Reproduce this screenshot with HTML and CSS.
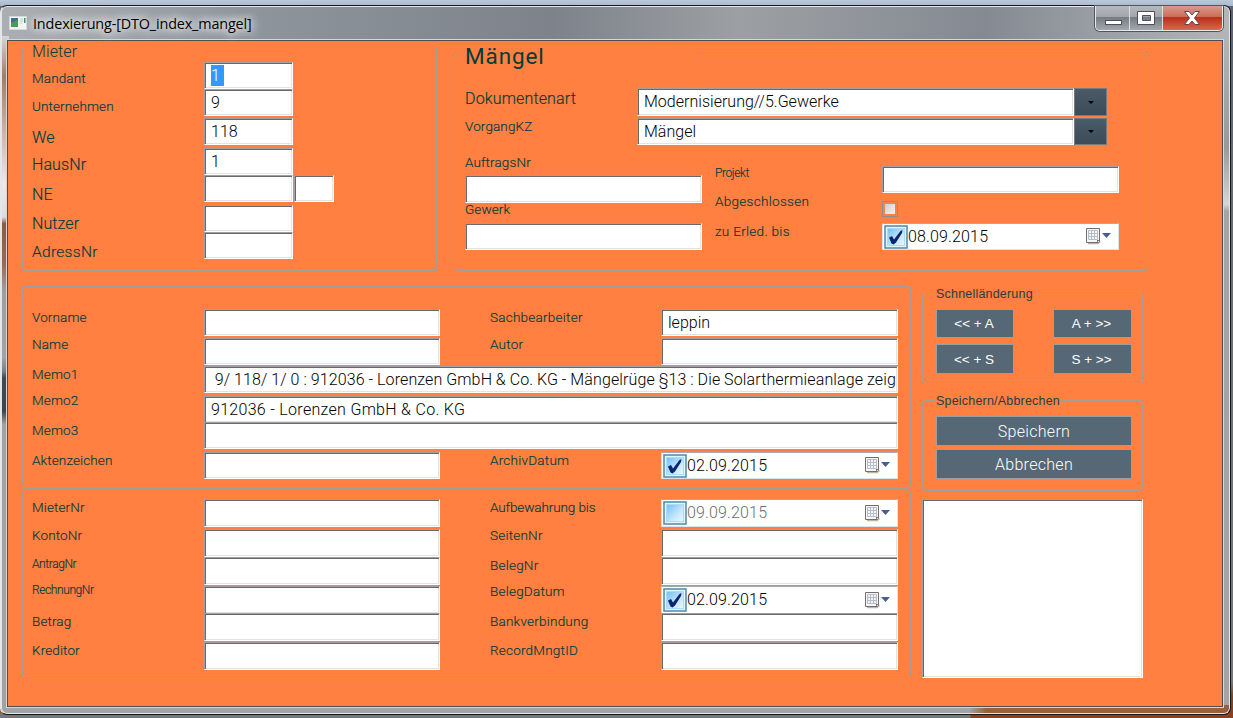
FILE: index.html
```html
<!DOCTYPE html>
<html lang="de">
<head>
<meta charset="utf-8">
<title>Indexierung</title>
<link rel="stylesheet" href="styles.css">
</head>
<body>
<svg class="defs" width="0" height="0" aria-hidden="true">
  <linearGradient id="blue" x1="0" y1="0" x2="1" y2="1"><stop offset="0" stop-color="#72bff5"/><stop offset=".6" stop-color="#c5e7fc"/><stop offset="1" stop-color="#e9f7ff"/></linearGradient>
  <symbol id="box" viewBox="0 0 24 24">
    <rect x="1" y="1" width="22" height="22" fill="#def9fd" stroke="#5187a8" stroke-width="1.5"/>
    <rect x="3.5" y="3.5" width="17" height="17" fill="url(#blue)" stroke="#a7dcfb"/>
  </symbol>
  <symbol id="tick" viewBox="0 0 24 24">
    <path d="M5 12.500l3-1.500 2 3.500L16.500 6l2-1-.5 3L12 17.500l-2.500 2-2-1z" fill="#0b2474"/>
  </symbol>
  <symbol id="cal" viewBox="0 0 26 17">
    <path d="M2 15.500h10l2.500-2" fill="none" stroke="#b9b3b1" stroke-width="1.500"/>
    <path d="M.500.500h13v13l-1 1h-12z" fill="#f7f7f7" stroke="#776b6b"/>
    <path d="M2.500 2.500h9v9h-9zM5.500 2.500v9M8.500 2.500v9M2.500 5.500h9M2.500 8.500h9" fill="none" stroke="#b5bdca"/>
    <path d="M11 14.500v-2.500h2.500z" fill="#776b6b"/>
    <path d="M16 5h9l-4.500 5z" fill="#44618f"/>
  </symbol>
</svg>
<div class="window">
  <header class="titlebar">
    <svg class="app-icon" width="18" height="16" viewBox="0 0 18 16"><path d="M.5 1.500h17v13H.5z" fill="#f3f5f3" stroke="#d4d8d8"/><path d="M2 3h7v9H2z" fill="#2b7a8e"/><path d="M2 8l7-3v7H2z" fill="#4c9b58"/><path d="M11 4h3M11 6h3M11 8h2" stroke="#c3c8c8"/><path d="M15 3h1.500v5H15z" fill="#3a8d7a"/></svg>
    <h1>Indexierung-[DTO_index_mangel]</h1>
    <div class="controls">
      <span class="ctl min"><svg width="34" height="23"><rect x="9.500" y="14.500" width="16" height="4" fill="#fff" stroke="#4d5058"/></svg></span>
      <span class="ctl max"><svg width="32" height="23"><path d="M7.500 5.500h17v13h-17zM12.500 9.500v5h8v-5z" fill="#fff" fill-rule="evenodd" stroke="#4d5058"/></svg></span>
      <span class="ctl close"><svg width="58" height="23"><path d="M21.500 5.500h4.500l3 3.500 3-3.500h4.500l-5 6.500 5 6.500h-4.500l-3-3.500-3 3.500h-4.500l5-6.500z" fill="#fff" stroke="#6a4345"/></svg></span>
    </div>
  </header>
  <main class="client">
    <div class="top">
      <section class="group mieter">
        <h2 class="legend l16">Mieter</h2>
        <div class="labels">
          <label>Mandant</label><label>Unternehmen</label><label class="l16">We</label><label class="l16">HausNr</label><label class="l16">NE</label><label class="l16">Nutzer</label><label class="l16 adr">AdressNr</label>
        </div>
        <div class="fields">
          <div class="field"><span class="sel">1</span></div><div class="field">9</div><div class="field">118</div><div class="field">1</div><div class="pair"><div class="field"></div><div class="field"></div></div><div class="field"></div><div class="field"></div>
        </div>
      </section>
      <section class="group mangel">
        <h2 class="legend">Mängel</h2>
        <div class="docs">
          <div class="doc-labels"><label class="l16 dok">Dokumentenart</label><label>VorgangKZ</label></div>
          <div class="combos">
            <div class="combo"><div class="field">Modernisierung//5.Gewerke</div><span class="drop"></span></div>
            <div class="combo"><div class="field">Mängel</div><span class="drop"></span></div>
          </div>
        </div>
        <div class="order">
          <div class="order-left"><label>AuftragsNr</label><div class="field"></div><label>Gewerk</label><div class="field"></div></div>
          <div class="order-labels"><label class="l12">Projekt</label><label>Abgeschlossen</label><label>zu Erled. bis</label></div>
          <div class="order-fields"><div class="field"></div><span class="check"></span>
            <div class="date"><svg class="cb"><use href="#box"/><use href="#tick"/></svg><span>08.09.2015</span><svg class="cal"><use href="#cal"/></svg></div></div>
        </div>
      </section>
    </div>
    <div class="bottom">
      <div class="stack">
        <section class="group person">
          <div class="labels"><label>Vorname</label><label>Name</label><label>Memo1</label><label>Memo2</label><label>Memo3</label><label>Aktenzeichen</label></div>
          <div class="person-grid">
            <div class="field a"></div><label>Sachbearbeiter</label><div class="field c">leppin</div>
            <div class="field a"></div><label>Autor</label><div class="field c"></div>
            <div class="field wide memo1">&nbsp;9/ 118/ 1/ 0 : 912036 - Lorenzen GmbH &amp; Co. KG - Mängelrüge §13 : Die Solarthermieanlage zeig</div>
            <div class="field wide memo2">912036 - Lorenzen GmbH &amp; Co. KG</div>
            <div class="field wide"></div>
            <div class="field a"></div><label>ArchivDatum</label>
            <div class="date c"><svg class="cb"><use href="#box"/><use href="#tick"/></svg><span>02.09.2015</span><svg class="cal"><use href="#cal"/></svg></div>
          </div>
        </section>
        <section class="group booking">
          <div class="labels"><label>MieterNr</label><label>KontoNr</label><label class="l12">AntragNr</label><label class="l12">RechnungNr</label><label>Betrag</label><label>Kreditor</label></div>
          <div class="fields"><div class="field"></div><div class="field"></div><div class="field"></div><div class="field"></div><div class="field"></div><div class="field"></div></div>
          <div class="labels second"><label>Aufbewahrung bis</label><label>SeitenNr</label><label>BelegNr</label><label>BelegDatum</label><label>Bankverbindung</label><label>RecordMngtID</label></div>
          <div class="fields">
            <div class="date off"><svg class="cb"><use href="#box"/></svg><span>09.09.2015</span><svg class="cal"><use href="#cal"/></svg></div>
            <div class="field"></div><div class="field"></div>
            <div class="date"><svg class="cb"><use href="#box"/><use href="#tick"/></svg><span>02.09.2015</span><svg class="cal"><use href="#cal"/></svg></div>
            <div class="field"></div><div class="field"></div>
          </div>
        </section>
      </div>
      <aside class="side">
        <section class="group quick"><h2 class="legend">Schnelländerung</h2>
          <button>&lt;&lt; + A</button><button>A + &gt;&gt;</button><button>&lt;&lt; + S</button><button>S + &gt;&gt;</button>
        </section>
        <section class="group save"><h2 class="legend">Speichern/Abbrechen</h2>
          <button>Speichern</button><button>Abbrechen</button>
        </section>
        <div class="field notes"></div>
      </aside>
    </div>
  </main>
</div>
</body>
</html>
```
FILE: styles.css
```css
* { box-sizing: border-box; }
body {
  margin: 0; width: 1233px; height: 718px; overflow: hidden; padding-top: 5px;
  background:
    linear-gradient(90deg, #777 970px, #8a411f 971px) 0 713px / 100% 5px no-repeat,
    linear-gradient(#b9c9db, #a9b8ca) 0 0 / 100% 6px no-repeat,
    linear-gradient(#5c6470, #6d6f73 40%, #777 95%, #8a411f 97%);
  font: 300 13.5px/20px Roboto, "Liberation Sans", sans-serif; color: #003c3c;
}
.defs { position: absolute; }
.window {
  width: 1231px; height: 710px; border: 1px solid #17191c; border-left-color: #e3e6e9; border-radius: 7px;
  box-shadow: inset 0 0 0 1px #e4e7e9; padding: 1px 7px 0 6px;
  background:
    linear-gradient(90deg, transparent 968px, #99603f 985px) 0 699px / 100% 10px no-repeat,
    linear-gradient(#d5d5d5, #a47c67 6%, #f1e6e4 22%, #ddd 27%, #8d5c42 28%, #9a6b50 34%, #9d9f9f 38%, #a3a3a3 48%, #76818b 50%, #414a53 51%, #3c444c 56%, #a2a2a2 58%) 0 30px / 8px 670px no-repeat,
    linear-gradient(90deg, #abafb3 0, #8f959d 20%, #7e838b 45%, #9ca0a4 60%, #858a92 80%, #b2b6b9) 0 0 / 100% 35px no-repeat,
    linear-gradient(#b8bbbd, #999 20%, #d6d6d6 28%, #a4a4a4 29%, #a4a4a4);
}
.titlebar { display: flex; height: 33px; }
.app-icon { margin: 8px 0 0 2px; }
.titlebar h1 {
  margin: 6px 0 0 6px; font: 400 14.4px/22px "Open Sans", sans-serif; letter-spacing: -.15px; color: #000;
  text-shadow: 0 0 8px #fff, 0 0 10px #fff, 0 0 14px #e8eaec;
}
.controls { display: flex; margin: -1px 0 0 auto; height: 25px; border: 1px solid #e7e9ea; border-top: 0; border-radius: 0 0 5px 5px; box-shadow: 0 0 0 1px #50545b; overflow: hidden; width: 128px; }
.ctl { background: linear-gradient(#b5b9be, #a2a6ac 45%, #777c84 48%, #a3a7ad); border-right: 1px solid #dcdee0; }
.min { width: 34px; } .max { width: 33px; } .close { width: 59px; border: 0; background: linear-gradient(#d99a8d, #cd6d59 44%, #b8301a 48%, #d8684e); }
.ctl svg { display: block; }
.client { width: 1216px; height: 667px; background: #ff8040; border: 1px solid #4d4d4d; outline: 1px solid #d7d7d7; }

.group { position: relative; border: 1px solid #9f9f97; border-bottom-width: 2px; border-radius: 4px; }
.legend { position: absolute; left: 9px; top: -10px; margin: 0; font-size: 16px; font-weight: 300; line-height: 20px; background: #ff8040; }
label { display: block; height: 20px; white-space: nowrap; letter-spacing: .12px; padding-left: 1px; -webkit-text-stroke: .15px #003c3c; }
.l16 { font-size: 16px; letter-spacing: .1px; }
.adr { font-size: 15.500px; letter-spacing: .3px; }
.dok { letter-spacing: .15px; }
.l12 { font-size: 12px; letter-spacing: -.4px; line-height: 22px; }
.field {
  background: #fff; border: 1px solid #fff; border-top-color: #a0a0a0; border-left-color: #a0a0a0;
  box-shadow: inset 1px 1px #696969, inset -1px -1px #e3e3e3;
  padding: 2px 0 0 6px; font-size: 16px; line-height: 22px; color: #000; white-space: nowrap; overflow: hidden; letter-spacing: .02px;
}
.sel { background: #39f; color: #fff; display: inline-block; height: 21px; line-height: 21px; width: 13px; }

.top { display: flex; gap: 17px; padding: 6px 0 0 14px; }
.mieter { width: 416px; height: 224px; border-right-width: 2px; display: flex; }
.mieter .legend { width: 66px; top: -6px; padding-left: 0; }
.mieter .labels { flex: none; width: 181px; padding: 20px 0 0 8px; display: grid; grid-template-rows: 28px 32px 27px 30px 29px 28px 20px; align-content: start; align-items: start; }
.mieter .fields { padding-top: 14px; width: 130px; display: grid; grid-template-rows: 27px 29px 30px 27px 30px 27px 27px; align-content: start; }
.mieter .field { width: 89px; height: 27px; }
.pair { display: flex; gap: 1px; }
.pair .field + .field { width: 40px; }
.mangel { width: 693px; height: 218px; margin-top: 6px; padding-left: 9px; }
.mangel label { padding-left: 0; }
.mangel .legend { font-size: 22.500px; font-weight: 400; line-height: 26px; width: 237px; letter-spacing: .9px; top: -11px; left: 9px; }
.docs { display: flex; padding-top: 34px; }
.doc-labels { width: 172px; display: grid; grid-template-rows: 27px 20px; padding-top: 1px; }
.combos { display: grid; grid-template-rows: 28px 27px; gap: 2px; }
.combo { display: flex; width: 470px; }
.combo .field { width: 437px; }
.drop { width: 33px; border: 1px solid #777a7b; background: linear-gradient(#4a5b69, #3c4b57); display: grid; place-items: center; }
.drop::after { content: ""; border: 3px solid transparent; border-top-color: #000; border-bottom: 0; }
.order { display: flex; }
.order-left { width: 250px; padding-top: 7px; display: grid; grid-template-rows: 23px 28px 20px 27px; }
.order-left .field { width: 237px; }
.order-left label:nth-of-type(2) { margin-top: -4px; }
.order-labels { width: 167px; padding-top: 17px; display: grid; grid-template-rows: 29px 30px 20px; align-content: start; }
.order-labels label + label { letter-spacing: .3px; }
.order-fields { width: 237px; padding-top: 21px; display: grid; grid-template-rows: 27px 16px 27px; row-gap: 7px; align-content: start; }
.check { width: 16px; height: 16px; margin-top: 1px; border: 1px solid #8e8f8f; background: linear-gradient(135deg, #cbcfd3, #f4f4f4) content-box; background-color: #f4f4f4; padding: 2px; }
.date { height: 27px; background: #fff; border: 1px solid #dfe1e8; border-top-color: #a9abb0; display: flex; align-items: center; font-size: 16px; letter-spacing: .15px; color: #000; padding: 0 6px 0 1px; }
.cb { width: 24px; height: 24px; }
.cal { width: 26px; height: 17px; margin-left: auto; }
.off span { color: #6d6d6d; }

.bottom { display: flex; gap: 11px; padding: 15px 0 0 14px; }
.stack { width: 889px; }
.person { height: 203px; display: flex; border-width: 2px 1px 1px; }
.person .labels, .booking .labels { flex: none; padding-left: 8px; display: grid; align-content: start; }
.person .labels { width: 181px; padding-top: 19px; grid-template-rows: 27px 30px 26px 30px 30px 20px; }
.person-grid { padding-top: 21px; display: grid; grid-template-columns: 236px 221px 237px; grid-template-rows: 29px 28px 30px 26px 30px 27px; align-content: start; }
.person-grid label { padding-left: 50px; margin-top: -2px; letter-spacing: .25px; }
.person-grid label:nth-of-type(2) { margin-top: -4px; }
.person-grid .field { height: 27px; }
.wide { grid-column: 1 / 4; }
.memo1 { letter-spacing: .13px; word-spacing: -.25px; }
.memo2 { letter-spacing: .3px; }
.booking { height: 189px; display: flex; border-top-width: 1px; border-bottom-width: 1px; }
.booking .labels { width: 181px; padding-top: 7px; grid-template-rows: 28px 28px 26px 32px 29px 20px; }
.booking .labels.second { width: 221px; padding-left: 49px; grid-template-rows: 28px 30px 26px 30px 29px 20px; }
.booking .fields { flex: none; width: 236px; padding-top: 9px; display: grid; grid-template-rows: 30px 28px 29px 27px 29px 28px; align-content: start; }
.booking .second + .fields { width: 237px; }
.booking .second label { letter-spacing: .22px; }
.booking .second label:first-child { letter-spacing: -.1px; }
.booking .field, .booking .date { height: 28px; }
.side { width: 221px; padding-top: 7px; }
.side .legend { font: 400 12.500px/16px "Liberation Sans", sans-serif; left: 13px; top: -8px; letter-spacing: .2px; color: #1e4040; }
.side button { margin: 0; padding: 0 2px 0 0; background: #566775; border: 1px solid #9aa0a2; color: #fff; font: 400 13.5px "Liberation Sans", sans-serif; }
.quick { height: 91px; border-bottom-width: 1px; display: grid; grid-template: 29px 30px / 78px 79px; gap: 6px 39px; padding: 15px 0 0 13px; }
.save { margin-top: 16px; height: 91px; display: grid; grid-template: 30px 30px / 196px; row-gap: 3px; padding: 15px 0 0 13px; }
.side .save button { font: 300 16px Roboto, sans-serif; letter-spacing: .3px; padding: 0; }
.notes { height: 179px; margin-top: 8px; }
```
